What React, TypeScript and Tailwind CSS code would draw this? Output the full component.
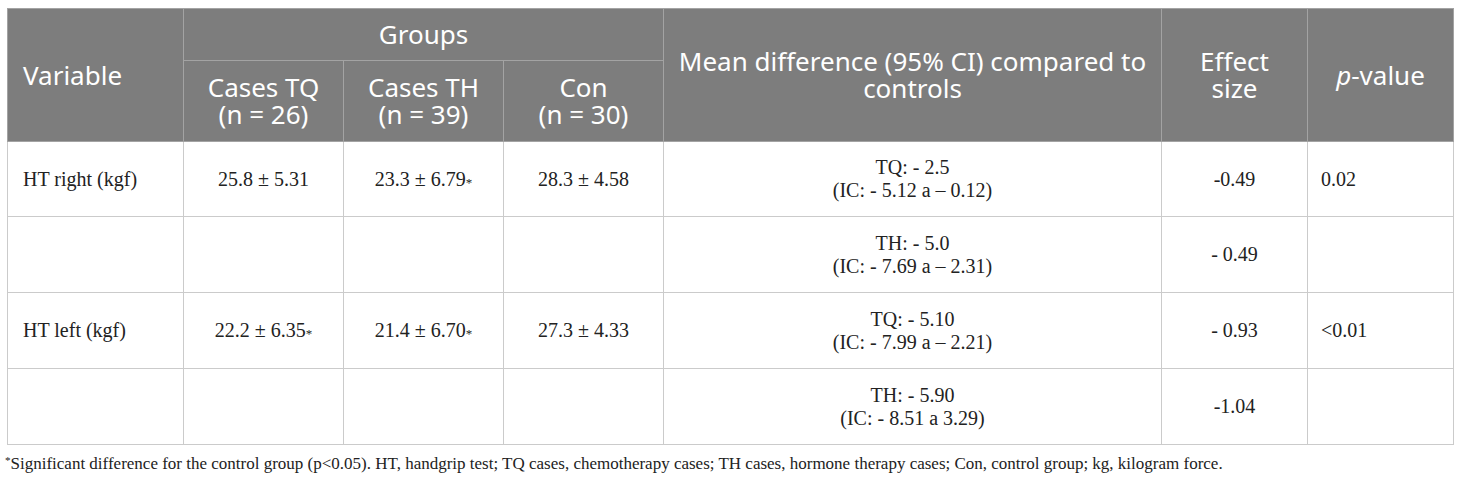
const head = "bg-[#7d7d7d] text-white font-normal border border-[#a3a3a3] align-middle";
const cell = "border border-[#cbcbcb] align-middle";

const rows = [
  {
    v: "HT right (kgf)",
    tq: "25.8 ± 5.31",
    th: "23.3 ± 6.79*",
    con: "28.3 ± 4.58",
    md: ["TQ: - 2.5", "(IC: - 5.12 a – 0.12)"],
    es: "-0.49",
    p: "0.02",
  },
  {
    v: "",
    tq: "",
    th: "",
    con: "",
    md: ["TH: - 5.0", "(IC: - 7.69 a – 2.31)"],
    es: "- 0.49",
    p: "",
  },
  {
    v: "HT left (kgf)",
    tq: "22.2 ± 6.35*",
    th: "21.4 ± 6.70*",
    con: "27.3 ± 4.33",
    md: ["TQ: - 5.10", "(IC: - 7.99 a – 2.21)"],
    es: "- 0.93",
    p: "<0.01",
  },
  {
    v: "",
    tq: "",
    th: "",
    con: "",
    md: ["TH: - 5.90", "(IC: - 8.51 a 3.29)"],
    es: "-1.04",
    p: "",
  },
];

function Val({ t }: { t: string }) {
  if (t.endsWith("*")) {
    return (
      <>
        {t.slice(0, -1)}
        <sup className="text-[13px] relative top-[1px]">*</sup>
      </>
    );
  }
  return <>{t}</>;
}

export default function App() {
  return (
    <div className="bg-white w-[1460px] h-[481px] pt-[8px] px-[7px]">
      <table className="table-fixed border-collapse w-[1446px]">
        <colgroup>
          <col className="w-[176px]" />
          <col className="w-[160px]" />
          <col className="w-[160px]" />
          <col className="w-[160px]" />
          <col className="w-[498px]" />
          <col className="w-[146px]" />
          <col className="w-[146px]" />
        </colgroup>
        <thead className="font-['Noto_Sans',sans-serif] text-[26px] leading-[27px]">
          <tr className="h-[52px]">
            <th rowSpan={2} className={`${head} text-left pl-[15px]`}>
              Variable
            </th>
            <th colSpan={3} className={`${head} text-center`}>
              Groups
            </th>
            <th rowSpan={2} className={`${head} text-center px-1`}>
              Mean difference (95% CI) compared to
              <br />
              controls
            </th>
            <th rowSpan={2} className={`${head} text-center`}>
              Effect
              <br />
              size
            </th>
            <th rowSpan={2} className={`${head} text-center`}>
              <span className="italic">p</span>-value
            </th>
          </tr>
          <tr className="h-[81px]">
            <th className={`${head} text-center`}>
              Cases TQ
              <br />
              (n = 26)
            </th>
            <th className={`${head} text-center`}>
              Cases TH
              <br />
              (n = 39)
            </th>
            <th className={`${head} text-center`}>
              Con
              <br />
              (n = 30)
            </th>
          </tr>
        </thead>
        <tbody className="font-['Liberation_Serif',serif] text-[20px] leading-[23px] text-[#222]">
          {rows.map((r, i) => (
            <tr key={i} className={i === 0 ? "h-[75px]" : "h-[76px]"}>
              <td className={`${cell} pl-[15px]`}>{r.v}</td>
              <td className={`${cell} text-center`}>
                <Val t={r.tq} />
              </td>
              <td className={`${cell} text-center`}>
                <Val t={r.th} />
              </td>
              <td className={`${cell} text-center`}>
                <Val t={r.con} />
              </td>
              <td className={`${cell} text-center`}>
                {r.md[0]}
                <br />
                {r.md[1]}
              </td>
              <td className={`${cell} text-center`}>{r.es}</td>
              <td className={`${cell} pl-[13px]`}>{r.p}</td>
            </tr>
          ))}
        </tbody>
      </table>
      <p className="font-['Liberation_Serif',serif] text-[17px] leading-[20px] text-[#222] mt-[9px] -ml-[2px]">
        <sup className="text-[11px]">*</sup>Significant difference for the control group (p&lt;0.05). HT, handgrip test; TQ
        cases, chemotherapy cases; TH cases, hormone therapy cases; Con, control group; kg, kilogram force.
      </p>
    </div>
  );
}
